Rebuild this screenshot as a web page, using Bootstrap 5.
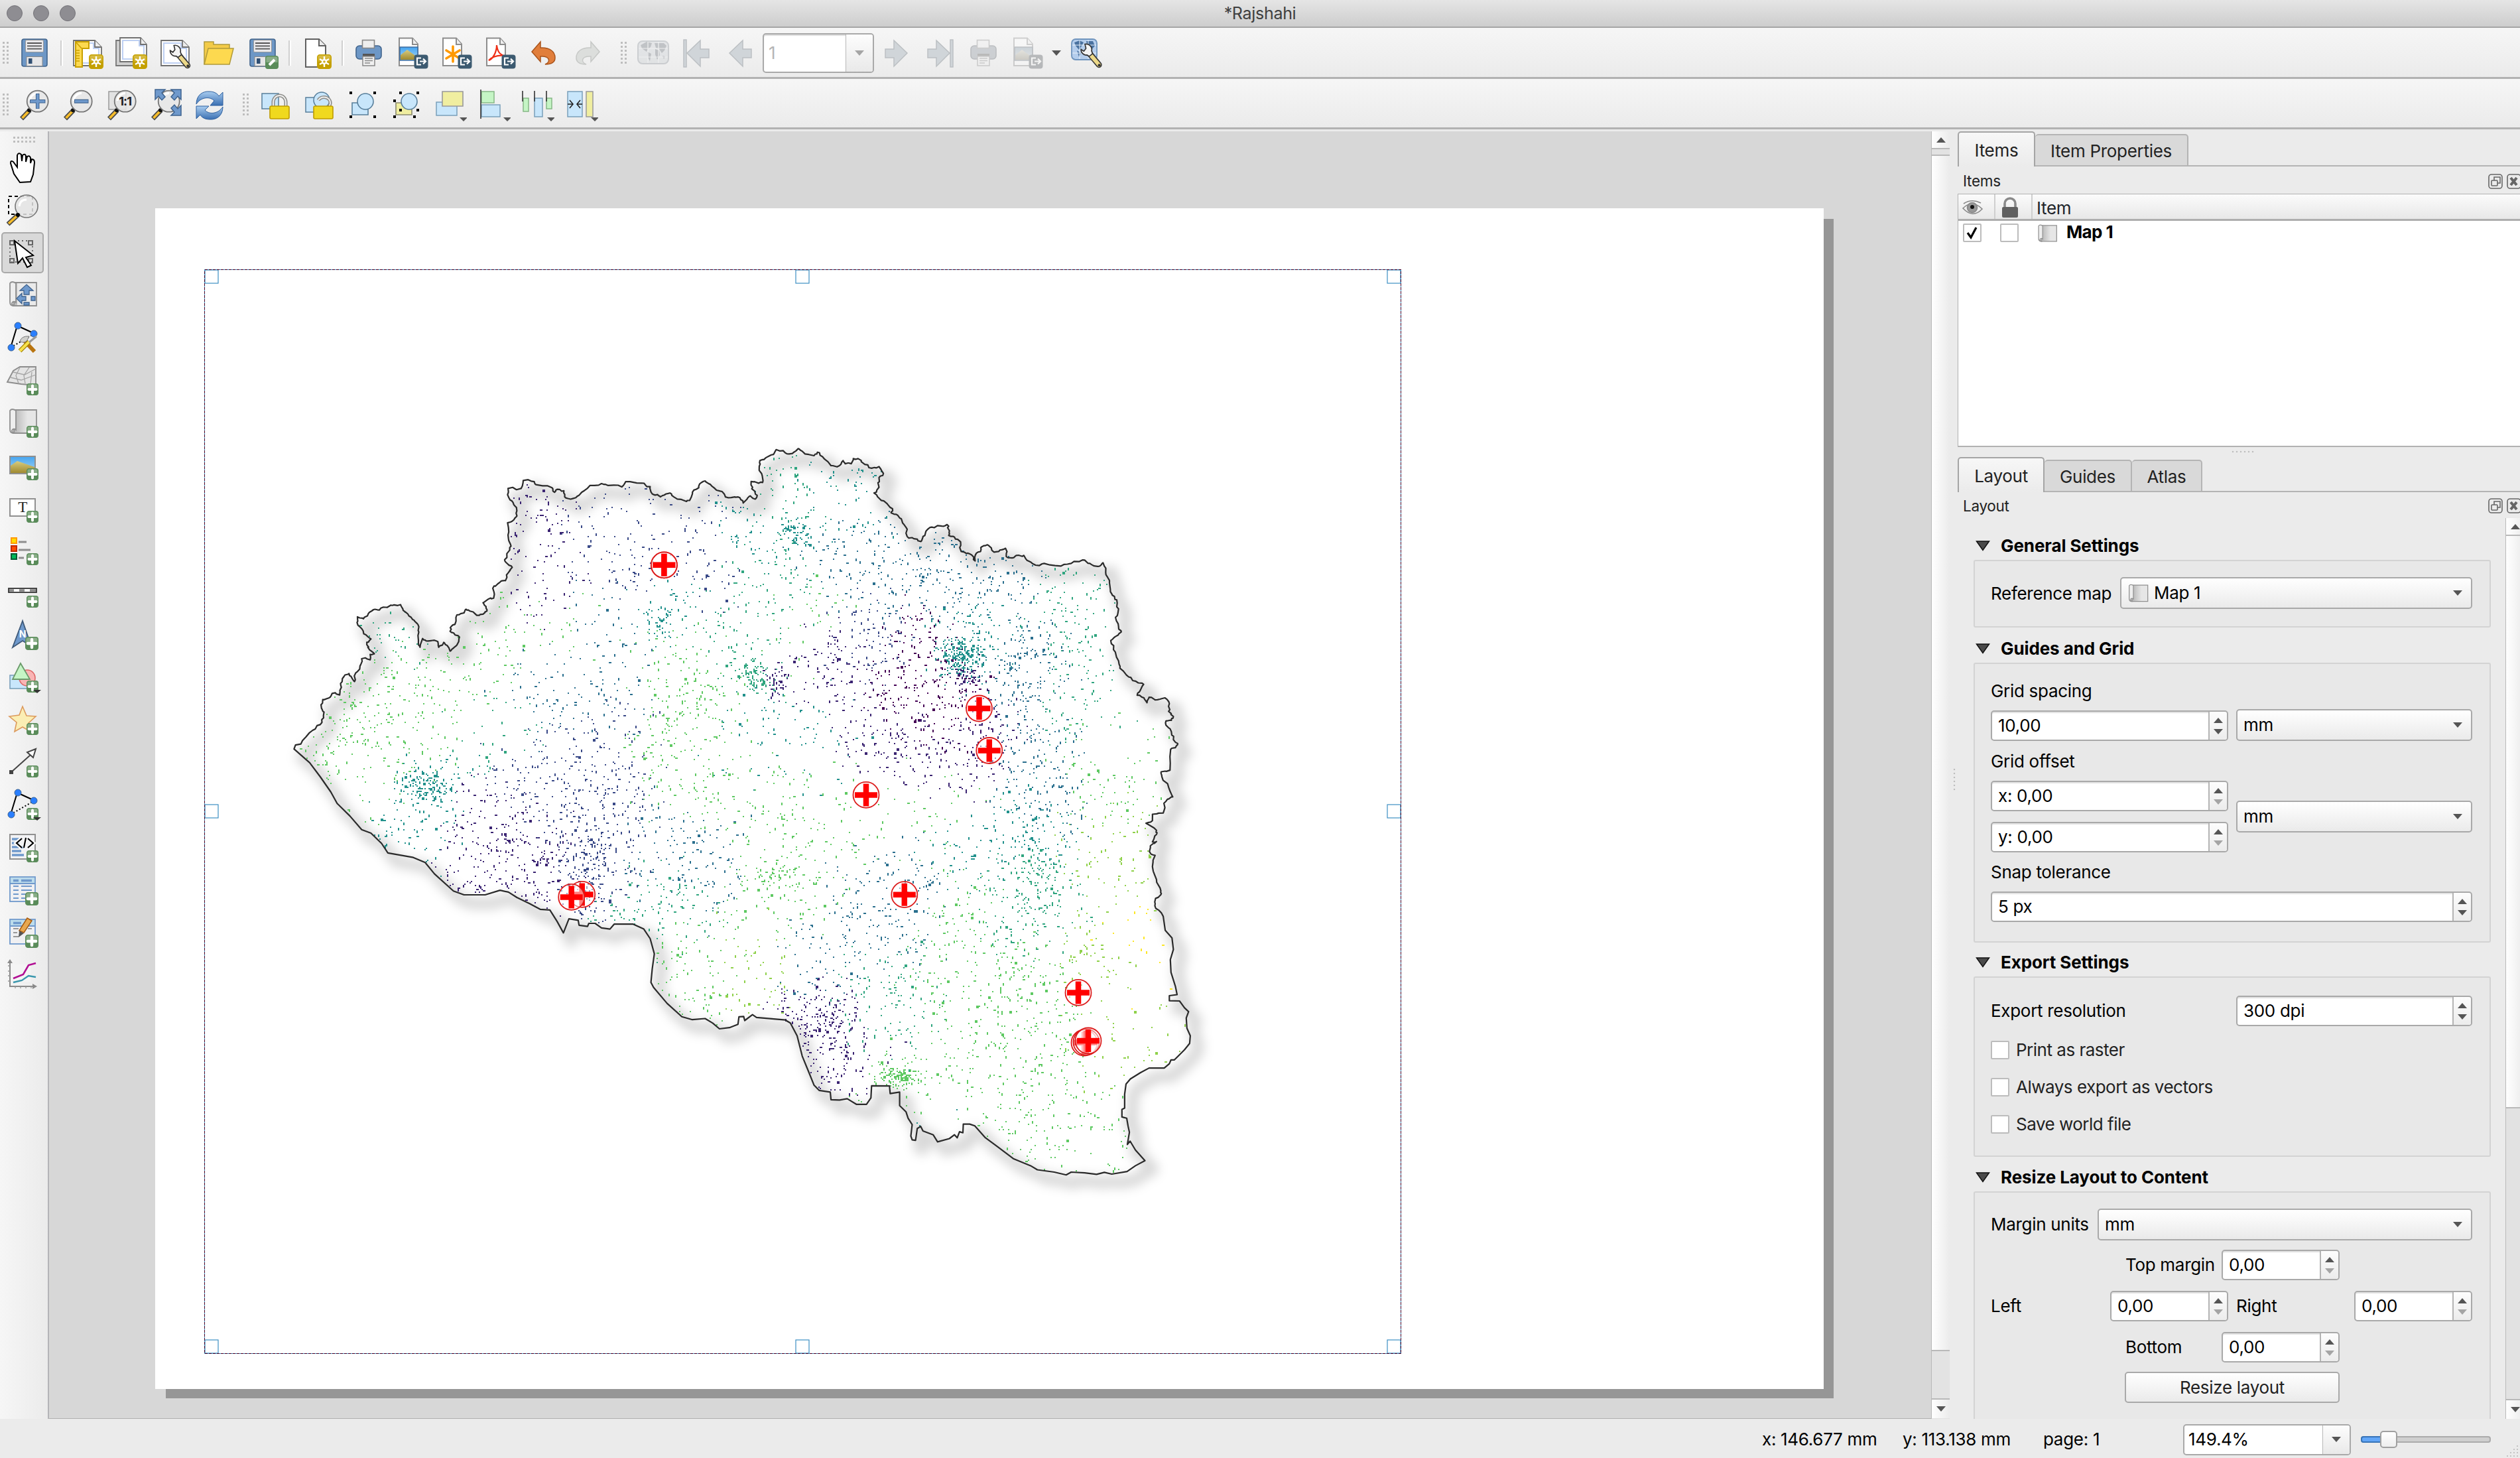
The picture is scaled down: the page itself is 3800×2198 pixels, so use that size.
<!DOCTYPE html>
<html lang="en">
<head>
<meta charset="utf-8">
<title>*Rajshahi</title>
<link href="https://cdn.jsdelivr.net/npm/bootstrap@5.3.0/dist/css/bootstrap.min.css" rel="stylesheet">
<style>
:root{--edge:#a9a9a9;--panel:#ebebeb}
html,body{width:3800px;height:2198px;overflow:hidden}
body{font-family:Inter,"Liberation Sans",sans-serif;font-size:26px;line-height:32px;letter-spacing:-.3px;color:#000;background:var(--panel)}
svg{display:block;flex:none}
.titlebar{height:42px;background:linear-gradient(#e5e5e5,#cdcdcd);border-bottom:2px solid #a5a5a5;color:#404040;flex:none}
.lights{position:absolute;left:10px;top:8px;gap:16px}
.lights i{width:24px;height:24px;border-radius:50%;background:#8e8d92;border:1px solid #737278}
.tools{height:77px;background:linear-gradient(#f6f6f6,#ebebeb);border-bottom:3px solid #b2b2b2;flex:none;padding:2px 0 0 4px}
.tools.second{height:76px;padding-top:5px}
.slot{width:66px;flex:none;display:flex;align-items:center;justify-content:center}
.grip{width:10px;height:34px;margin-right:5px;flex:none;background:radial-gradient(circle at 1.5px 1.5px,#bdbdbd 1.4px,transparent 1.6px) 0 0/6px 6px}
.vsep{width:14px;height:38px;flex:none;background:linear-gradient(90deg,transparent 6px,#d0d0d0 6px,#d0d0d0 8px,#fff 8px,#fff 10px,transparent 10px)}
.ghost{opacity:.35;filter:grayscale(.8)}
.tri{width:0;height:0;border:7px solid transparent;border-bottom-width:0;border-top:8px solid #555;flex:none}
.tri.up{border-bottom:8px solid #555;border-top-width:0}
.tri.off{border-top-color:#a5a5a5}
.boxed{border:2px solid var(--edge);border-radius:5px;background:#fff}
.pagebox{width:168px;height:60px;color:#b5b5b5;box-shadow:inset 0 2px 1px #ddd}
.dropbtn{width:41px;border-left:1px solid #b8b8b8;background:linear-gradient(#fdfdfd,#e9e9e9)}
.sidebar{width:74px;background:linear-gradient(90deg,#f6f6f6,#ebebeb);border-right:2px solid #b4b4b8;padding-top:8px;flex:none}
.sidebar .hgrip{width:34px;height:10px;margin:0 0 5px 20px;background:radial-gradient(circle at 1.5px 1.5px,#bdbdbd 1.4px,transparent 1.6px) 0 0/6px 6px}
.sidebar .tool{height:64px;width:68px;display:flex;align-items:center;justify-content:center}
.sidebar .on{border:2px solid #a9a9a9;border-radius:5px;background:#d9d9d9;width:64px;height:62px;margin:1px 2px}
.stage{background:#d7d7d7;border-bottom:1px solid #b0b0b0;width:2838px;flex:none}
.vbar{width:28px;flex:none;border-left:1px solid #b9b9b9;background:#e2e2e2}
.vbar>div{display:flex;align-items:center;justify-content:center;background:linear-gradient(90deg,#fff,#ebebeb)}
.dock{width:848px;flex:none}
.tabrow{border-bottom:0;position:relative;gap:0;align-items:flex-end;box-shadow:inset 0 -2px #b4b4b4}
.tabrow .nav-link{border:2px solid #b4b4b4;border-bottom:2px solid #b4b4b4;border-left:0;border-radius:5px 5px 0 0;background:#d9d9d9;color:#222;padding:0;text-align:center;margin:0;height:49px;line-height:48px}
.tabrow .nav-link.active{border:2px solid #a5a5a5;border-bottom:0;background:linear-gradient(#f7f7f7,#ebebeb);height:53px;color:#222;line-height:54px}
.docktitle{font-size:22.5px;color:#222;padding:2px 0 0 8px}
.tree{background:#fff;border:1px solid #b2b2b2;border-right:0;border-bottom-width:2px;height:382px;flex:none}
.treehead{height:40px;background:linear-gradient(#fbfbfb,#e8e8e8);border-bottom:3px solid #aeaeae}
.treehead>div{border-right:2px solid #cfcfcf;width:56px;display:flex;align-items:center;justify-content:center;padding:2px 10px 0 0}
.tick{width:28px;height:28px;border:2px solid #bcbcbc;background:#fff;flex:none;border-radius:2px}
.ghead{font-weight:650;letter-spacing:-.1px;height:32px;gap:16px;padding-left:27px}
.gbox{margin-left:24px;width:780px;border:2px solid #d3d3d3;border-radius:3px;background:#e8e8e8;padding:0 26px 0 24px;flex:none}
.combo,.spin{border:2px solid var(--edge);border-radius:5px;display:flex;align-items:center;padding-left:9px;height:46px;flex:none}
.combo{height:48px;background:linear-gradient(#fff,#eaeaea);padding-right:13px}
.combo .tri,.spin .arrows{margin-left:auto}
.spin{background:#fff;box-shadow:inset 0 2px 1px #e2e2e2}
.arrows{width:28px;align-self:stretch;border-left:2px solid #b4b4b4;background:linear-gradient(#fdfdfd,#ececec);display:flex;flex-direction:column;align-items:center;justify-content:center;gap:9px;border-radius:0 4px 4px 0}
.push{background:linear-gradient(#fff,#eaeaea);border:2px solid var(--edge);border-radius:5px;width:324px;height:47px;padding:0;font-size:26px;line-height:43px;color:#222;letter-spacing:-.3px}
.w356{width:356px}.w358{width:358px}.w178{width:178px}
.opt{height:28px;gap:10px;color:#222;letter-spacing:-.5px}
.status{height:58px;flex:none;position:relative}
.track{width:196px;height:10px;border:2px solid #ababab;border-radius:4px;background:#cfcfcf;position:relative}
.track::before{content:"";position:absolute;left:-2px;top:-2px;width:34px;height:10px;background:#62a6f7;border:2px solid #3874b8;border-radius:4px}
.track::after{content:"";position:absolute;left:27px;top:-10px;width:26px;height:26px;border:2px solid #a0a0a0;border-radius:5px;background:linear-gradient(#fff,#eee)}
</style>
<script src="https://cdn.jsdelivr.net/npm/bootstrap@5.3.0/dist/js/bootstrap.bundle.min.js"></script>
</head>
<body class="d-flex flex-column">
<svg width="0" height="0" style="position:absolute">
<defs>
<linearGradient id="gy" x2="0" y2="1"><stop offset="0" stop-color="#d9bf4d"/><stop offset=".5" stop-color="#d0ad20"/><stop offset=".5" stop-color="#c4a000"/></linearGradient>
<linearGradient id="gg" x2="0" y2="1"><stop offset="0" stop-color="#8db08b"/><stop offset=".5" stop-color="#86ab84"/><stop offset=".5" stop-color="#5a8c5a"/></linearGradient>
<linearGradient id="gb" x2="0" y2="1"><stop offset="0" stop-color="#a9cdf0"/><stop offset="1" stop-color="#3a6fb2"/></linearGradient>
<linearGradient id="gsky" x2="0" y2="1"><stop offset="0" stop-color="#45a5f0"/><stop offset="1" stop-color="#a9d6f5"/></linearGradient>
<linearGradient id="gsand" x2="0" y2="1"><stop offset="0" stop-color="#d8cc80"/><stop offset="1" stop-color="#a08a30"/></linearGradient>
<linearGradient id="gmap" x2="1"><stop offset="0" stop-color="#b5b5b5"/><stop offset=".6" stop-color="#e6e6e6"/></linearGradient>
<symbol id="bsun" viewBox="0 0 22 22"><rect x=".8" y=".8" width="20.4" height="20.4" rx="3.5" fill="url(#gy)" stroke="#c4a000" stroke-width="1.5"/><g stroke="#fff" stroke-width="2.4"><path d="M11 3v16M4 7l14 8M4 15l14-8"/></g><circle cx="11" cy="11" r="4" fill="#fff"/><circle cx="11" cy="11" r="1.8" fill="#cfae25"/></symbol>
<symbol id="bplus" viewBox="0 0 18 18"><rect x=".7" y=".7" width="16.6" height="16.6" rx="3" fill="url(#gg)" stroke="#5a8c5a" stroke-width="1.4"/><path d="M9 3.500v11M3.500 9h11" stroke="#fff" stroke-width="4" stroke-linecap="round"/></symbol>
<symbol id="bout" viewBox="0 0 22 22"><rect x=".5" y=".5" width="21" height="21" rx="4" fill="#3c5a70"/><path d="M11 5.500H5v10h6M9 10.500h9M14 6.500l4 4-4 4" fill="none" stroke="#fff" stroke-width="2.200"/></symbol>
<symbol id="lens" viewBox="0 0 48 48"><path d="M4.500 45L17 32" stroke="#4a4a4a" stroke-width="7"/><path d="M5.500 44L15 34" stroke="#f7bd2a" stroke-width="3.600"/><circle cx="16" cy="32.300" r="3" fill="#111"/><circle cx="28.700" cy="18.700" r="16" fill="#e6e6e6" fill-opacity=".85" stroke="#757575" stroke-width="1.800"/><path d="M17 18a12 12 0 0 1 12-11.500" stroke="#fff" stroke-width="3" fill="none"/></symbol>
<symbol id="wrench" viewBox="0 0 32 36"><path d="M13 14L27 31" stroke="#333" stroke-width="8.500" stroke-linecap="round"/><path d="M16 18L27 31" stroke="#ecd888" stroke-width="5.500" stroke-linecap="round"/><path d="M7 1.500l1.500 6-3 4-4-2.500C1 13 5 18 10 17l3 2 5-4-1.500-4C18 6 13 0 7 1.500z" fill="#f4f4f4" stroke="#333" stroke-width="1.600"/><circle cx="27.500" cy="31.500" r="2" fill="#333"/></symbol>
<symbol id="floppy" viewBox="0 0 48 48"><rect x="5" y="3" width="38" height="41" rx="3" fill="#6d97c6" stroke="#41648c" stroke-width="1.600"/><rect x="10.500" y="4.500" width="27" height="18" rx="1.500" fill="#eae9ec" stroke="#999"/><path d="M13 9h22M13 13.300h22M13 17.600h22" stroke="#555" stroke-width="1.800"/><rect x="12" y="29.500" width="24" height="14" fill="#e6e6e8" stroke="#888"/><rect x="15" y="32" width="5.500" height="8" fill="#2f4f73"/></symbol>
<symbol id="printer" viewBox="0 0 48 48"><rect x="5" y="13" width="38" height="20" rx="5" fill="#6d97c6" stroke="#41648c" stroke-width="1.600"/><rect x="14.500" y="4.500" width="18" height="12" fill="#eee" stroke="#888" stroke-width="1.600"/><rect x="15" y="25" width="18" height="6" fill="#555"/><path d="M15 29h18v14H15z" fill="#f0f0f0" stroke="#888" stroke-width="1.500"/><path d="M18 32h12M18 35.500h12M18 39h8" stroke="#888" stroke-width="1.700"/></symbol>
<symbol id="sheet" viewBox="0 0 48 48"><path d="M4 1.500h20l8 9V43H4z" fill="#fff" stroke="#8d8d8d" stroke-width="2"/><path d="M24 1.500V11h8" fill="#eee" stroke="#8d8d8d" stroke-width="2"/></symbol>
<symbol id="globe" viewBox="0 0 48 48"><rect x="1" y="6" width="46" height="34" rx="7" fill="#b9cfe8" stroke="#6f94bd" stroke-width="2"/><path d="M5 12l9-5 8 2-2 6-4 3-2 4-7-5zM15 22l6 3-2 11-3-5zM26 9h14l4 4-3 7-4 4-4-6-5-2zM27 18l6 2 1 7-4 7-3-8zM38 28l4 1-2 4z" fill="#49719f"/><path d="M2 17h44M2 30h44M16 7v32M32 7v32" stroke="#e9f1fa" stroke-width="1.200"/></symbol>
<symbol id="scroll" viewBox="0 0 48 48"><path d="M11 5h34v35H11z" fill="url(#gmap)" stroke="#909090" stroke-width="1.800"/><path d="M5 6q3-4 9 0v29q-4-3-6 1 0 4 5 4h-4q-4-1-4-6z" fill="#eee" stroke="#909090" stroke-width="1.800"/></symbol>
<symbol id="i-plot" viewBox="0 0 48 48"><path d="M7 9h29v26H7z" fill="#f4f4f4"/><path d="M5 43V5M5 42h36" stroke="#8a8a8a" stroke-width="2" fill="none"/><path d="M1 7l4-6 4 6zM39 38l7 4-7 4z" fill="#8a8a8a"/><path d="M2 11h3M2 19h3M2 26h3M2 34h3M13 42v3M21 42v3M29 42v3M37 42v3" stroke="#999" stroke-width="1.300"/><path d="M10 30l15-6 8-14 11-3" stroke="#b10f93" stroke-width="2.600" fill="none"/><path d="M10 36l13-3 10-7 11 2" stroke="#3a97ad" stroke-width="2.400" fill="none"/></symbol>
<symbol id="sync" viewBox="0 0 48 48"><path d="M4 23C4 9 14 3 24 4c7 0 12 3 14 7l6-6v20H25l6-7c-6-7-20-6-27 5z" fill="url(#gb)" stroke="#2d5f9e"/><path d="M44 27c0 14-10 20-20 19-7 0-12-3-14-7l-6 6V26h19l-6 6c6 7 20 6 27-5z" fill="url(#gb)" stroke="#2d5f9e"/></symbol>
<symbol id="padlock" viewBox="0 0 32 42"><rect x="1" y="21" width="29" height="19" rx="2" fill="#f0d91e" stroke="#bf9c00" stroke-width="1.600"/></symbol>
</defs></svg>

<header class="titlebar d-flex align-items-center justify-content-center position-relative"><div class="lights d-flex"><i></i><i></i><i></i></div><span style="font-size:25px">*Rajshahi</span></header>

<nav class="tools d-flex align-items-center">
<div class="grip"></div>
<div class="slot"><svg width="48" height="48"><use href="#floppy"/></svg></div><div class="vsep"></div>
<div class="slot"><svg width="48" height="48" viewBox="0 0 48 48"><path d="M3 5h32l10 10v28H3z" fill="#fff" stroke="#707070" stroke-width="1.800"/><path d="M7 9h26v8h8v22H7z" fill="none" stroke="#bed0f3" stroke-width="2"/><path d="M35 5v10h10" fill="#ececec" stroke="#707070" stroke-width="1.800"/><path d="M6 7h20v10H16v28H6z" fill="#fcd94f" stroke="#c9a000" stroke-width="2"/><path d="M6 7l9 10M7 20h5M7 24h5M7 28h5M7 32h5M7 36h5" stroke="#c9a000" stroke-width="1.500"/><use href="#bsun" x="26" y="26" width="22" height="22"/></svg></div>
<div class="slot"><svg width="48" height="48" viewBox="0 0 48 48"><path d="M1 5h30v38H1z" fill="#cfcfcf" stroke="#777" stroke-width="1.800"/><path d="M7 1h31l9 10v26H7z" fill="#fff" stroke="#707070" stroke-width="1.800"/><path d="M11 5h25v8h7v20H11z" fill="none" stroke="#bed0f3" stroke-width="2"/><path d="M38 1v10h9" fill="#ececec" stroke="#707070" stroke-width="1.800"/><use href="#bsun" x="26" y="26" width="22" height="22"/></svg></div>
<div class="slot"><svg width="48" height="48" viewBox="0 0 48 48"><path d="M3 5h32l10 10v28H3z" fill="#fff" stroke="#707070" stroke-width="1.800"/><path d="M7 9h26v8h8v22H7z" fill="none" stroke="#bed0f3" stroke-width="2"/><path d="M35 5v10h10" fill="#ececec" stroke="#707070" stroke-width="1.800"/><use href="#wrench" x="15" y="11" width="33" height="37"/></svg></div>
<div class="slot"><svg width="48" height="48" viewBox="0 0 48 48"><path d="M2 7h14v4h24v29H2z" fill="#f3cb48" stroke="#b09a3a" stroke-width="1.500"/><path d="M8 17h38l-6 24H2z" fill="#fdd94f" stroke="#b09a3a" stroke-width="1.500"/></svg></div>
<div class="slot"><svg width="48" height="48" viewBox="0 0 48 48"><use href="#floppy"/><rect x="28.700" y="28.700" width="18.600" height="18.600" rx="3" fill="url(#gg)" stroke="#5a8c5a" stroke-width="1.400"/><path d="M34 42l8-8" stroke="#fff" stroke-width="4"/></svg></div><div class="vsep"></div>
<div class="slot"><svg width="48" height="48" viewBox="0 0 48 48"><path d="M9 3h20l10 10v32H9z" fill="#fff" stroke="#606060" stroke-width="2"/><path d="M29 3v10h10" fill="#ececec" stroke="#606060" stroke-width="2"/><use href="#bsun" x="26" y="26" width="22" height="22"/></svg></div><div class="vsep"></div>
<div class="slot"><svg width="48" height="48"><use href="#printer"/></svg></div>
<div class="slot"><svg width="48" height="48" viewBox="0 0 48 48"><use href="#sheet"/><path d="M5 15h27v20H5z" fill="url(#gsky)" stroke="#3f6da0" stroke-width="1.600"/><path d="M6 27l10-8 15 11v4H6z" fill="url(#gsand)"/><use href="#bout" x="26" y="26" width="22" height="22"/></svg></div>
<div class="slot"><svg width="48" height="48" viewBox="0 0 48 48"><use href="#sheet"/><path d="M19 14v23M9 20l20 12M9 32l20-12" stroke="#f90" stroke-width="3.600" stroke-linecap="round"/><use href="#bout" x="26" y="26" width="22" height="22"/></svg></div>
<div class="slot"><svg width="48" height="48" viewBox="0 0 48 48"><use href="#sheet"/><path d="M7 35c6-2 12-12 12-23 1 9 5 15 12 16-9-1-18 1-24 7z" fill="none" stroke="#ee3018" stroke-width="2.200"/><use href="#bout" x="26" y="26" width="22" height="22"/></svg></div>
<div class="slot"><svg width="48" height="48" viewBox="0 0 48 48"><path d="M6 22L19 7v9c14-1 22 6 22 15 0 7-5 10-15 10 9-4 7-13-7-12v8z" fill="#e17e3b" stroke="#a9541c" stroke-width="1.500"/></svg></div>
<div class="slot"><svg width="48" height="48" viewBox="0 0 48 48"><path d="M42 22L29 7v9C15 15 7 22 7 31c0 7 5 10 15 10-9-4-7-13 7-12v8z" fill="#dcdedc" stroke="#c6c8c6" stroke-width="1.500"/></svg></div>
<div class="grip" style="margin:0 6px 0 17px"></div>
<div class="slot ghost"><svg width="48" height="48"><use href="#globe"/></svg></div>
<div class="slot"><svg width="48" height="48" viewBox="0 0 48 48" fill="#d0d5d9" stroke="#bcc0c3" stroke-width="1.500"><path d="M4 4h4v41H4zM9 24L29 5v13h13v13H29v13z"/></svg></div>
<div class="slot"><svg width="48" height="48" viewBox="0 0 48 48" fill="#d0d5d9" stroke="#bcc0c3" stroke-width="1.500"><path d="M7 24L27 5v13h13v13H27v13z"/></svg></div>
<div class="boxed pagebox d-flex align-items-center overflow-hidden" style="padding-left:7px"><span>1</span><div class="dropbtn ms-auto h-100 d-flex align-items-center justify-content-center"><span class="tri off"></span></div></div>
<div class="slot"><svg width="48" height="48" viewBox="0 0 48 48" fill="#d0d5d9" stroke="#bcc0c3" stroke-width="1.500"><path d="M41 24L21 5v13H8v13h13v13z"/></svg></div>
<div class="slot"><svg width="48" height="48" viewBox="0 0 48 48" fill="#d0d5d9" stroke="#bcc0c3" stroke-width="1.500"><path d="M40 4h4v41h-4zM39 24L19 5v13H6v13h13v13z"/></svg></div>
<div class="slot ghost"><svg width="48" height="48"><use href="#printer"/></svg></div>
<div class="slot ghost"><svg width="48" height="48" viewBox="0 0 48 48"><use href="#sheet"/><path d="M5 15h27v20H5z" fill="url(#gsky)" stroke="#3f6da0" stroke-width="1.600"/><path d="M6 27l10-8 15 11v4H6z" fill="url(#gsand)"/><use href="#bout" x="26" y="26" width="22" height="22"/></svg></div>
<span class="tri" style="margin:0 6px 0 4px"></span>
<div class="slot"><svg width="50" height="48" viewBox="0 0 50 48"><rect x="2" y="3" width="38" height="31" rx="6" fill="#b4cdec" stroke="#6f94bd" stroke-width="1.800"/><path d="M6 8l8-3 6 3-4 7-3 4-5-6zM24 6h10l3 7-5 6-6-4zM10 20l6 4-3 6z" fill="#49719f"/><path d="M3 12h36M3 24h36M14 4v29M27 4v29" stroke="#e9f1fa"/><use href="#wrench" x="14" y="9" width="35" height="38"/></svg></div>
</nav>

<nav class="tools second d-flex align-items-center">
<div class="grip"></div>
<div class="slot"><svg width="48" height="48" viewBox="0 0 48 48"><use href="#lens"/><path d="M28.700 7v23M17 18.700h23.400" stroke="#3f638e" stroke-width="5.500"/><path d="M28.700 8v21.500M18 18.700h21.400" stroke="#6f99cc" stroke-width="3.400"/></svg></div>
<div class="slot"><svg width="48" height="48" viewBox="0 0 48 48"><use href="#lens"/><path d="M18 18.700h21.500" stroke="#3f638e" stroke-width="6"/><path d="M19 18.700h19.500" stroke="#6f99cc" stroke-width="3.600"/></svg></div>
<div class="slot"><svg width="48" height="48" viewBox="0 0 48 48"><path d="M4 4h26v27H4z" fill="#e2e2e2" stroke="#999" stroke-width="1.500"/><use href="#lens"/><text x="28.700" y="25" font-size="18" font-weight="700" font-family="Inter" text-anchor="middle" fill="#222" letter-spacing="-.8">1:1</text></svg></div>
<div class="slot"><svg width="48" height="48" viewBox="0 0 48 48"><use href="#lens"/><g fill="#6f99cc" stroke="#3f638e" stroke-width="1.500"><path d="M8 1h15l-5 5 5 6-5 5-5-6-5 5z"/><path d="M47 1H32l5 5-5 6 5 5 5-6 5 5zM47 40H32l5-5-5-6 5-5 5 6 5-5z"/></g></svg></div>
<div class="slot"><svg width="48" height="48"><use href="#sync"/></svg></div>
<div class="grip" style="margin:0 6px 0 17px"></div>
<div class="slot"><svg width="48" height="48" viewBox="0 0 48 48"><path d="M4 7h25v23H4z" fill="#c8e6fb" stroke="#587f9b" stroke-width="1.500"/><path d="M21 28V20a9.500 10 0 0 1 19 0v8" fill="none" stroke="#8c8c88" stroke-width="5"/><path d="M21 28V20a9.500 10 0 0 1 19 0v8" fill="none" stroke="#eee" stroke-width="2"/><use href="#padlock" x="15" y="5" width="32" height="42"/></svg></div>
<div class="slot"><svg width="48" height="48" viewBox="0 0 48 48"><path d="M4 13h22v22H4z" fill="#c8e6fb" stroke="#587f9b" stroke-width="1.500"/><circle cx="28" cy="17" r="12" fill="#c8e6fb" stroke="#587f9b" stroke-width="1.500"/><path d="M23 17a9 8 0 1 1 17 8v3" fill="none" stroke="#8c8c88" stroke-width="5"/><path d="M23 17a9 8 0 1 1 17 8v3" fill="none" stroke="#eee" stroke-width="2"/><use href="#padlock" x="15" y="5" width="32" height="42"/></svg></div>
<div class="slot"><svg width="48" height="48" viewBox="0 0 48 48"><path d="M8 21h24v18H8z" fill="#c8e6fb" stroke="#587f9b" stroke-width="1.600"/><circle cx="28" cy="19" r="12" fill="#c8e6fb" stroke="#587f9b" stroke-width="1.600"/><path d="M4 4h4v4H4zM40 4h4v4h-4zM4 40h4v4H4zM40 40h4v4h-4z"/></svg></div>
<div class="slot"><svg width="48" height="48" viewBox="0 0 48 48"><path d="M8 21h24v18H8z" fill="#f0eea0" stroke="#8a8a70" stroke-width="1.600"/><circle cx="28" cy="19" r="12" fill="#c8e6fb" stroke="#587f9b" stroke-width="1.600"/><path d="M13 4h4v4h-4zM39 4h4v4h-4zM4 16h4v4H4zM13 30h4v4h-4zM39 30h4v4h-4zM4 40h4v4H4zM34 40h4v4h-4z"/></svg></div>
<div class="slot"><svg width="50" height="52" viewBox="0 0 50 52"><path d="M4 22h31v20H4z" fill="#c8e6fb" stroke="#7aa0bb" stroke-width="1.500"/><path d="M13 6h31v22H13z" fill="#f0eea0" stroke="#999" stroke-width="1.600"/><path d="M39 45h12l-6 6z" fill="#555"/></svg></div>
<div class="slot"><svg width="50" height="52" viewBox="0 0 50 52"><path d="M6 6h19v17H6z" fill="#c5f5c5" stroke="#86b886" stroke-width="1.500"/><path d="M6 26h28v18H6z" fill="#c8e6fb" stroke="#7aa0bb" stroke-width="1.500"/><path d="M5 3v44" stroke="#333" stroke-width="1.600"/><path d="M39 45h12l-6 6z" fill="#555"/></svg></div>
<div class="slot"><svg width="50" height="52" viewBox="0 0 50 52"><path d="M3 16h8v20H3zM38 16h8v16h-8z" fill="#c5f5c5" stroke="#86b886" stroke-width="1.500"/><path d="M20 16h12v28H20z" fill="#c8e6fb" stroke="#7aa0bb" stroke-width="1.500"/><path d="M2 5v16M20 5v16M38 5v16" stroke="#333" stroke-width="1.600"/><path d="M39 45h12l-6 6z" fill="#555"/></svg></div>
<div class="slot"><svg width="50" height="52" viewBox="0 0 50 52"><path d="M4 6h22v38H4z" fill="#c8e6fb" stroke="#7aa0bb" stroke-width="1.500"/><path d="M32 6h10v38H32z" fill="#f0eea0" stroke="#999" stroke-width="1.500"/><path d="M4 25h8M7 19l5 6-5 6M26 25h-8M23 19l-5 6 5 6" fill="none" stroke="#222" stroke-width="1.600"/><path d="M39 45h12l-6 6z" fill="#555"/></svg></div>
</nav>

<main class="d-flex" style="height:1941px;margin-top:3px">
<aside class="sidebar" id="side"><div class="hgrip"></div></aside>

<section class="stage">
<svg id="paper" width="2838" height="1940" viewBox="74 198 2838 1940">
<defs><filter id="soft" x="-10%" y="-10%" width="120%" height="120%"><feGaussianBlur stdDeviation="8"/></filter></defs>
<rect x="250" y="330" width="2515" height="1778" fill="#969696"/>
<rect x="234" y="314" width="2516" height="1780" fill="#fff"/>
<g id="district"></g>
<g id="clinics"></g>
<g fill="#fff" stroke="#3d8fc4" stroke-width="1.200" id="handles"></g>
<rect x="308.500" y="406.500" width="1804" height="1634" fill="none" stroke="#3d9ac4" stroke-width="1" shape-rendering="crispEdges"/>
<rect x="308.500" y="406.500" width="1804" height="1634" fill="none" stroke="#4a0028" stroke-width="1" stroke-dasharray="4 2" shape-rendering="crispEdges"/>
</svg>
</section>

<div class="vbar d-flex flex-column">
<div style="height:25px"><span class="tri up"></span></div>
<div style="height:12px;background:#e2e2e2;border:2px solid #b9b9b9;border-width:2px 0"></div>
<div style="height:1800px"></div>
<div style="height:75px;background:#e3e3e3;border:2px solid #b9b9b9;border-width:2px 0"></div>
<div style="height:28px"><span class="tri"></span></div>
</div>
<div style="width:12px;background:radial-gradient(circle at 7px 2px,#bdbdbd 1.400px,transparent 1.600px) 0 0/12px 6px;background-clip:content-box;padding:958px 0 947px" class="flex-shrink-0"></div>

<section class="dock d-flex flex-column">
<div class="nav nav-tabs tabrow" style="height:53px"><a class="nav-link active" style="width:117px">Items</a><a class="nav-link" style="width:231px">Item Properties</a></div>
<div class="docktitle d-flex align-items-center" style="height:41px"><span>Items</span>
<svg class="ms-auto" style="margin-top:2px" width="48" height="24" viewBox="0 0 48 24" fill="none" stroke="#666" stroke-width="1.600"><rect x="1" y="1" width="20" height="21" rx="4"/><rect x="5" y="10" width="9" height="8" rx="1"/><path d="M9 10V5h9v9h-4"/><rect x="29" y="1" width="20" height="21" rx="4"/><path d="M34 6l9 11M43 6l-9 11" stroke-width="4"/></svg></div>
<div class="tree">
<div class="treehead d-flex"><div><svg width="32" height="26" viewBox="0 0 32 26" fill="none" stroke="#888" stroke-width="1.600"><path d="M1 14Q15 0 30 15Q16 30 1 14zM2 7Q14-1 28 6"/><circle cx="15" cy="13" r="7.500" fill="#999"/><circle cx="15" cy="12" r="3" fill="#111" stroke="none"/></svg></div><div><svg width="26" height="32" viewBox="0 0 26 32"><path d="M5 16V10a8 8 0 0 1 16 0v6" fill="none" stroke="#8a8a8a" stroke-width="3.600"/><rect x="1" y="15" width="24" height="16" rx="2" fill="#606060"/></svg></div><span class="text-dark" style="padding:5px 0 0 6px">Item</span></div>
<div class="d-flex align-items-center" style="height:36px;padding-left:7px"><span class="tick"><svg width="24" height="24" viewBox="0 0 24 24"><path d="M5 12l5 7 8-15" fill="none" stroke="#000" stroke-width="3.200"/></svg></span><span class="tick" style="margin-left:28px"></span><svg style="margin:0 14px 0 28px" width="30" height="29" viewBox="2 2 44 40"><use href="#scroll" width="48" height="48"/></svg><span style="font-weight:700;letter-spacing:-.6px;margin-top:-3px">Map 1</span></div>
</div>
<div style="height:15px;background:radial-gradient(circle at 2px 7px,#bdbdbd 1.400px,transparent 1.600px) 413px 0/6px 14px;width:448px;background-clip:content-box;padding-left:413px"></div>
<div class="nav nav-tabs tabrow" style="height:53px"><a class="nav-link active" style="width:131px">Layout</a><a class="nav-link" style="width:132px">Guides</a><a class="nav-link" style="width:106px">Atlas</a></div>
<div class="docktitle d-flex align-items-center" style="height:39px"><span>Layout</span>
<svg class="ms-auto" width="48" height="24" viewBox="0 0 48 24" fill="none" stroke="#666" stroke-width="1.600"><rect x="1" y="1" width="20" height="21" rx="4"/><rect x="5" y="10" width="9" height="8" rx="1"/><path d="M9 10V5h9v9h-4"/><rect x="29" y="1" width="20" height="21" rx="4"/><path d="M34 6l9 11M43 6l-9 11" stroke-width="4"/></svg></div>
<div class="d-flex overflow-hidden" style="height:1358px">
<div class="d-flex flex-column flex-shrink-0" style="width:826px;padding-top:26px">
 <div class="ghead d-flex align-items-center"><svg width="22" height="16"><path d="M1.500 1h19L11 14.500z" fill="#4a4a4a" stroke="#111" stroke-width="1.500"/></svg>General Settings</div>
 <div class="gbox d-flex" style="height:102px;margin-top:5px;padding-top:24px"><span style="width:195px;line-height:50px">Reference map</span><div class="combo flex-grow-1"><svg style="margin-right:8px" width="32" height="28" viewBox="2 2 44 40"><use href="#scroll" width="48" height="48"/></svg>Map 1<span class="tri"></span></div></div>
 <div class="ghead d-flex align-items-center" style="margin-top:16px"><svg width="22" height="16"><path d="M1.500 1h19L11 14.500z" fill="#4a4a4a" stroke="#111" stroke-width="1.500"/></svg>Guides and Grid</div>
 <div class="gbox" style="height:422px;margin-top:5px;padding-top:25px">
  <div>Grid spacing</div>
  <div class="d-flex justify-content-between align-items-end" style="margin-top:11px"><div class="spin w358">10,00<div class="arrows"><span class="tri up"></span><span class="tri"></span></div></div><div class="combo w356">mm<span class="tri"></span></div></div>
  <div style="margin-top:15px">Grid offset</div>
  <div class="d-flex justify-content-between align-items-center" style="margin-top:13px"><div class="d-flex flex-column" style="gap:16px"><div class="spin w358">x: 0,00<div class="arrows"><span class="tri up"></span><span class="tri off"></span></div></div><div class="spin w358">y: 0,00<div class="arrows"><span class="tri up"></span><span class="tri off"></span></div></div></div><div class="combo w356">mm<span class="tri"></span></div></div>
  <div style="margin-top:14px">Snap tolerance</div>
  <div class="spin" style="margin-top:13px">5 px<div class="arrows"><span class="tri up"></span><span class="tri"></span></div></div>
 </div>
 <div class="ghead d-flex align-items-center" style="margin-top:14px"><svg width="22" height="16"><path d="M1.500 1h19L11 14.500z" fill="#4a4a4a" stroke="#111" stroke-width="1.500"/></svg>Export Settings</div>
 <div class="gbox" style="height:272px;margin-top:5px;padding-top:27px">
  <div class="d-flex justify-content-between align-items-center">Export resolution<div class="spin w356">300 dpi<div class="arrows"><span class="tri up"></span><span class="tri"></span></div></div></div>
  <div class="opt d-flex align-items-center" style="margin-top:22px"><span class="tick"></span>Print as raster</div>
  <div class="opt d-flex align-items-center" style="margin-top:28px"><span class="tick"></span>Always export as vectors</div>
  <div class="opt d-flex align-items-center" style="margin-top:28px"><span class="tick"></span>Save world file</div>
 </div>
 <div class="ghead d-flex align-items-center" style="margin-top:15px"><svg width="22" height="16"><path d="M1.500 1h19L11 14.500z" fill="#4a4a4a" stroke="#111" stroke-width="1.500"/></svg>Resize Layout to Content</div>
 <div class="gbox" style="height:380px;margin-top:5px;padding-top:24px">
  <div class="d-flex align-items-center"><span style="width:161px">Margin units</span><div class="combo flex-grow-1">mm<span class="tri"></span></div></div>
  <div class="d-flex align-items-center" style="margin-top:14px;padding-left:203px"><span style="width:145px">Top margin</span><div class="spin w178">0,00<div class="arrows"><span class="tri up"></span><span class="tri off"></span></div></div></div>
  <div class="d-flex align-items-center" style="margin-top:16px"><span style="width:180px">Left</span><div class="spin w178">0,00<div class="arrows"><span class="tri up"></span><span class="tri off"></span></div></div><span style="width:178px;padding-left:12px">Right</span><div class="spin w178 ms-auto">0,00<div class="arrows"><span class="tri up"></span><span class="tri off"></span></div></div></div>
  <div class="d-flex align-items-center" style="margin-top:16px;padding-left:203px"><span style="width:145px">Bottom</span><div class="spin w178">0,00<div class="arrows"><span class="tri up"></span><span class="tri off"></span></div></div></div>
  <button class="push d-block" style="margin:14px 0 0 202px">Resize layout</button>
 </div>
</div>
<div class="vbar d-flex flex-column"><div style="height:27px;border-bottom:2px solid #b9b9b9"><span class="tri up"></span></div><div style="height:863px;border-bottom:2px solid #b9b9b9"></div><div style="height:440px;background:#e2e2e2;border-bottom:2px solid #b9b9b9"></div><div style="height:28px"><span class="tri"></span></div></div>
</div>
</section>
</main>

<footer class="status d-flex align-items-center" style="padding:4px 44px 0 2657px"><span style="width:212px">x: 146.677 mm</span><span style="width:212px">y: 113.138 mm</span><span>page: 1</span>
<div class="boxed d-flex align-items-center overflow-hidden ms-auto" style="width:253px;height:47px;padding-left:6px">149.4%<div class="dropbtn ms-auto h-100 d-flex align-items-center justify-content-center"><span class="tri"></span></div></div>
<div class="track" style="margin-left:15px"></div>
<svg style="position:absolute;right:0;bottom:0" width="20" height="20" fill="#c4c4c4"><path d="M15 2h2v2h-2zM10 7h2v2h-2zM15 7h2v2h-2zM5 12h2v2H5zM10 12h2v2h-2zM15 12h2v2h-2zM0 17h2v2H0zM5 17h2v2H5zM10 17h2v2h-2zM15 17h2v2h-2z"/></svg>
</footer>

<script>
const plus='<use href="#bplus" x="30" y="29" width="18" height="18"/>';
const drop='<path d="M40 43h12l-6 5z" fill="#333"/>';
const nodes='<path d="M6 39L16 6l24 11" fill="none" stroke="#000" stroke-width="2"/><path d="M6 39l34-20" stroke="#000" stroke-width="2" stroke-dasharray="2 3"/><g fill="#2a7fff" stroke="#3f638e"><circle cx="17" cy="6" r="5"/><circle cx="41" cy="18" r="5"/><circle cx="7" cy="39" r="5"/></g>';
const tools=[
'<path d="M20 46L11 33 6 17q0-5 4-2l6 8V5q2-5 6-1l1 10 1-9q4-3 5 1v9l2-8q4-2 5 2v8l2-6q4 0 4 5l-2 18-4 11z" fill="#fff" stroke="#000" stroke-width="2"/>',
'<path d="M3 3h36v27H3z" fill="none" stroke="#000" stroke-width="2" stroke-dasharray="5 4"/><path d="M2 45l15-14" stroke="#4a4a4a" stroke-width="7"/><path d="M3 44l12-11" stroke="#f7bd2a" stroke-width="3.5"/><circle cx="30" cy="18" r="17" fill="#e4e4e4" fill-opacity=".85" stroke="#777" stroke-width="1.600"/><path d="M19 18q1-10 11-10" stroke="#fff" stroke-width="3" fill="none"/><circle cx="17" cy="31" r="3"/>',
'<path d="M5 6h34v32H5z" fill="none" stroke="#666" stroke-width="1.800" stroke-dasharray="2 4"/><path d="M5 6h6v6H5zM33 6h6v6h-6zM5 33h6v6H5zM33 33h6v6h-6z" fill="none" stroke="#666" stroke-width="2"/><path d="M12 6l5 34 7-8 7 14 6-3-8-12 11-3z" fill="#fff" stroke="#000" stroke-width="2"/>',
'<use href="#scroll"/><path d="M16 6h28v33H16z" fill="#eaeaea"/><g fill="#6f99cc" stroke="#3f638e" stroke-width="1.300"><path d="M30 8l10 9h-6v6h-8v-6h-6zM15 29l8-8v5h6v6h-6v5zM37 26h6v6h-6zM26 35h8v4h-8z"/></g>',
nodes+'<path d="M42 45L27 29" stroke="#b87410" stroke-width="6"/><path d="M20 44l14-14" stroke="#a08000" stroke-width="6.500"/><path d="M20 44l14-14" stroke="#f7e04a" stroke-width="4"/><path d="M20 30q2-9 14-8l-3 6q-4 5-11 2z" fill="#d0d0cc" stroke="#777"/><path d="M34 31l11-9" stroke="#999" stroke-width="3"/>',
'<path d="M1 27L10 10 20 4h24v28l-22-2z" fill="#e4e4e4" stroke="#8c8c8c" stroke-width="1.800"/><path d="M10 12l17 4 17-9M6 20l16 4 22-8M20 5l-6 12 4 12M34 5l-8 12 2 12M38 12l-2 18" fill="none" stroke="#a5a5a5" stroke-width="1.300"/>'+plus,
'<use href="#scroll"/>'+plus,
'<rect x="5" y="11" width="38" height="26" fill="url(#gsky)" stroke="#909090" stroke-width="2"/><path d="M6 25l10-7 26 9v9H6z" fill="url(#gsand)"/>'+plus,
'<rect x="5" y="11" width="38" height="26" fill="#fff" stroke="#909090" stroke-width="2"/><text x="24" y="31" text-anchor="middle" font-family="Liberation Serif" font-size="23" fill="#222">T</text>'+plus,
'<g stroke-width="2"><rect x="7" y="6" width="8" height="8" fill="#ffdd00" stroke="#f90"/><rect x="7" y="18" width="8" height="8" fill="#ff4a00" stroke="#c02800"/><rect x="7" y="30" width="8" height="8" fill="#00b858" stroke="#005a35"/></g><path d="M18 12h12M18 24h18M18 36h8" stroke="#8e8e8e" stroke-width="3"/>'+plus,
'<rect x="3" y="18" width="42" height="6" fill="#fff" stroke="#333" stroke-width="1.800"/><path d="M4 21h7M19 21h8M35 21h9" stroke="#888" stroke-width="3.500"/>'+plus,
'<path d="M24 3L9 43l15-10 13 8z" fill="#6f99cc" stroke="#3f5a7a" stroke-width="1.800"/><text x="24" y="28" font-size="14" font-weight="700" text-anchor="middle" fill="#fff">N</text><use href="#bplus" x="28" y="27" width="20" height="20"/>',
'<rect x="5" y="21" width="30" height="20" fill="#c8e6fb" stroke="#7aa0bb" stroke-width="1.600"/><circle cx="31" cy="25" r="12" fill="#f9b4b4" stroke="#d66" stroke-width="1.600"/><path d="M21 3L9 27h26z" fill="#c5f5c5" stroke="#6a9a6a" stroke-width="1.800"/>'+plus+drop,
'<path d="M24 4l6 14 14 1-11 10 3 13-12-7-12 7 3-14L4 19l15-2z" fill="#fbeeb4" stroke="#dc9a5c" stroke-width="1.600"/>'+plus,
'<path d="M7 39L36 13" stroke="#444" stroke-width="2"/><path d="M44 4L31 9l9 8z" fill="#fff" stroke="#444" stroke-width="2"/><rect x="4" y="36" width="6" height="6" fill="#444"/>'+plus,
nodes+plus+drop,
'<rect x="5" y="5" width="38" height="37" fill="#f2f2f4" stroke="#909090" stroke-width="2"/><path d="M8 12h14M8 18h11M8 24h18M8 30h14M8 36h18" stroke="#6f99cc" stroke-width="3.500"/><path d="M22 11l-8 7 8 7M33 11l8 7-8 7M29 10l-3 15" fill="none" stroke="#fff" stroke-width="5"/><path d="M23 11l-8 7 8 7M32 11l8 7-8 7M29 10l-3 15" fill="none" stroke="#000" stroke-width="2.200"/>'+plus,
'<rect x="5" y="5" width="38" height="37" fill="#f0f0f2" stroke="#6f99cc" stroke-width="1.800"/><path d="M6 6h36v9H6z" fill="#bcdcec"/><path d="M5 15h38" stroke="#6f99cc" stroke-width="2"/><path d="M10 10.500h8M22 10.500h16" stroke="#6f99cc" stroke-width="3.500"/><path d="M10 19h8M10 25h8M10 31h8M10 37h8M22 19h16M22 25h16M22 31h16M22 37h8" stroke="#6f99cc" stroke-width="2"/><use href="#bplus" x="28" y="28" width="20" height="20"/>',
'<rect x="5" y="5" width="38" height="37" fill="#f0f0f2" stroke="#6f99cc" stroke-width="1.800"/><path d="M6 6h36v9H6z" fill="#bcdcec"/><path d="M5 15h38" stroke="#6f99cc" stroke-width="2"/><path d="M10 10.500h12" stroke="#6f99cc" stroke-width="3.500"/><path d="M10 19h8M10 25h6M10 31h8M32 19h6" stroke="#999" stroke-width="2"/><path d="M31 3l7 4-12 18-7-3z" fill="#e8a850" stroke="#a85c10" stroke-width="1.500"/><path d="M19 22l7 4-8 6z" fill="#555"/><use href="#bplus" x="28" y="28" width="20" height="20"/>',
'<use href="#i-plot"/>'];
document.getElementById('side').insertAdjacentHTML('beforeend',tools.map((t,i)=>`<div class="tool${i==2?' on':''}"><svg width="48" height="48" viewBox="0 0 48 48" overflow="visible">${t}</svg></div>`).join(''));

// Boundary digitised on overlapping sheets: origin x, y, units per pixel in x and y, vertices
const sheets=[
[400,640,1.568,1.742,"68,852 88,830 112,803 130,788 138,770 139,755 133,745 136,722 150,718 158,706 176,710 180,690 178,680 186,662 198,654 206,668 211,675 214,652 224,634 228,615 248,618 248,604 258,602 247,592 240,578 240,572 250,563 238,552 228,536 217,520 218,505 232,510 244,496 256,486 270,487 285,480 300,475 320,473 326,488 340,503 352,514 361,525 363,545 362,575 366,585 372,562 380,568 395,567 408,570 410,585 422,572 430,580 437,595 445,587 455,575 459,558 446,548 437,543 440,530 450,520 453,500 465,496 475,485 484,490 500,501 515,498 524,490 522,478 515,468 528,458 540,456 538,430 550,418 562,410 568,410 574,390 584,375 572,365 566,355 578,330 580,315 574,290 573,258 588,250 595,240 594,218 586,205 576,192 574,168 605,168 610,147 636,150 640,158 678,166 684,178 690,170 706,174 708,190 722,196 738,188 748,178 768,160 795,155 810,160 843,164 852,150 890,154 910,163 915,182 928,184 934,190 948,182 957,180 966,190 996,202 1005,196 1010,178 1025,166 1028,155 1040,148 1052,157 1062,167 1080,176 1088,190 1110,190 1122,192 1130,206"],
[1100,640,1.96,2.063,"52,232 62,222 76,232 82,220 66,200 64,177 80,180 98,180 97,160 88,130 90,112 108,103 130,93 138,78 165,88 186,90 203,75 215,83 250,97 260,86 275,100 300,128 325,128 336,112 342,122 360,122 366,106 380,106 400,124 420,136 442,131 455,152 442,165 442,195 427,213 445,232 465,245 482,262 478,275 497,282 510,300 522,320 525,348 545,355 566,364 572,348 582,330 598,319 628,316 643,311 650,330 648,345 665,350 683,365 685,395 705,400 718,408 726,424 730,400 742,395 746,380 762,374 774,384 782,397 800,390 816,385 818,410 840,414 848,407 870,407 880,423 895,432 912,438 930,432 980,440 1010,432 1044,421 1065,432 1088,441 1097,438 1104,430 1112,460 1123,485 1126,520 1138,535 1146,555 1149,580 1141,600 1150,628 1158,645 1140,660 1127,672 1135,700 1150,735 1154,758 1180,785 1200,798 1224,808 1215,825 1205,842 1225,850 1234,865 1240,848 1265,856 1287,850 1300,868 1298,892 1312,908 1306,920 1290,922 1290,935 1306,955 1312,980 1325,992 1318,1005 1304,1010 1302,1075 1276,1080 1278,1095 1298,1128 1310,1158 1295,1165 1284,1178 1282,1208 1250,1212 1250,1232 1231,1240 1262,1262 1262,1275 1250,1298 1262,1297 1244,1310 1244,1333 1258,1340 1250,1375 1262,1415 1275,1450 1275,1462 1257,1485 1260,1505 1282,1530"],
[1100,1240,1.96,2.613,"1288,425 1308,455 1312,500 1303,540 1305,590 1318,645 1323,678 1300,682 1300,702 1330,703 1345,730 1357,745 1350,770 1352,810 1362,840 1360,870 1345,895 1315,935 1305,935 1300,950 1285,967 1240,967 1215,985 1185,1010 1172,1030 1168,1070 1168,1125 1160,1130 1160,1160 1174,1165 1178,1195 1182,1220 1176,1268 1184,1255 1200,1290 1228,1332 1200,1352 1175,1375 1130,1385 1108,1378 1085,1386 1050,1380 1010,1377 995,1388 960,1377 910,1368 890,1352 840,1325 790,1275 755,1240 725,1195 710,1188 691,1188 690,1222 680,1218 673,1242 665,1230 650,1245 615,1258 602,1230 572,1215 565,1197 555,1205 550,1252 540,1250 536,1235 540,1190 528,1165 522,1140 503,1115 503,1062 475,1068 473,1038 420,1037 418,1085 405,1110 375,1110 348,1088 325,1093 300,1092 298,1062 265,1055 250,1035 235,985 215,920 200,840 180,790 165,778 80,768 68,757 45,780 42,764 28,765 25,795 0,808"],
[400,640,1.568,1.742,"1074,1587 1058,1572 1040,1560 1010,1563 985,1555 950,1520 918,1478 912,1465 915,1430 920,1390 910,1350 895,1325 870,1312 825,1312 815,1325 795,1322 780,1310 765,1310 762,1318 742,1315 740,1302 718,1298 705,1335 690,1305 673,1275 650,1273 625,1258 595,1242 575,1228 555,1223 520,1235 470,1235 445,1225 400,1180 378,1150 350,1137 290,1125 275,1100 250,1073 228,1064 200,1028 170,995 155,965 130,925 105,888"]];
let seed=7;const rnd=()=>{seed=seed+0x6D2B79F5|0;let t=Math.imul(seed^seed>>>15,1|seed);t=t+Math.imul(t^t>>>7,61|t)^t;return((t^t>>>14)>>>0)/4294967296};
const gauss=()=>(rnd()+rnd()+rnd()+rnd()-2)*1.7;
const poly=[];sheets.forEach(([ox,oy,sx,sy,s],k)=>{let prev;s.split(' ').forEach(p=>{const[a,b]=p.split(',').map(Number),q=[ox+a/sx,oy+b/sy];
 if(prev&&k<2){const L=Math.hypot(q[0]-prev[0],q[1]-prev[1]);for(const f of[.33,.66])poly.push([prev[0]+(q[0]-prev[0])*f+(rnd()-.5)*Math.min(4,L*.3),prev[1]+(q[1]-prev[1])*f+(rnd()-.5)*Math.min(4,L*.3)])}
 poly.push(q);prev=q})});
const d='M'+poly.map(p=>p[0].toFixed(1)+' '+p[1].toFixed(1)).join('L')+'Z';
const inside=(x,y)=>{let c=false;for(let i=0,j=poly.length-1;i<poly.length;j=i++){const[a,b]=poly[i],[e,f]=poly[j];if((b>y)!=(f>y)&&x<(e-a)*(y-b)/(f-b)+a)c=!c}return c};
const pal=['#440154','#3b2472','#3a4a88','#2a6f8e','#21918c','#2fa57f','#5ec962','#8fd14a','#fde725'];
// Village zones: x, y, palette class, density
const zones=[[335,320,1,.5],[370,320,2,.45],[430,320,2,.35],[335,365,1,.35],[400,350,2,.4],[440,345,2,.3],[470,330,4,.5],[490,310,5,.5],[525,310,4,.5],[530,345,3,.55],[560,355,3,.7],[590,365,3,.8],[630,370,3,.7],[655,375,5,.7],[675,358,5,.4],[610,392,4,1],[640,400,3,.8],[668,400,5,.6],[692,400,5,.06],[705,440,5,.04],[480,365,5,.5],[460,395,5,.5],[500,390,6,.3],[520,408,1,.8],[545,400,2,.8],[565,405,0,1.2],[565,430,0,1.2],[590,440,0,.9],[545,460,1,.8],[590,475,1,.8],[615,455,1,.8],[640,430,3,.9],[640,470,3,.8],[665,440,5,.5],[690,470,6,.05],[718,470,6,.3],[410,385,4,.5],[380,390,3,.35],[350,395,6,.2],[240,440,6,.6],[212,448,6,.8],[280,420,6,.45],[305,390,6,.4],[235,385,5,.5],[270,385,6,.03],[260,468,6,.35],[265,488,4,.9],[262,512,4,.6],[225,490,6,.12],[310,450,5,.3],[340,430,3,.4],[370,430,3,.5],[370,460,2,.55],[330,490,2,.6],[300,510,1,.8],[330,530,1,.8],[370,500,2,.9],[375,530,2,1.1],[300,540,1,.8],[430,440,6,.6],[420,410,6,.35],[420,470,6,.6],[470,460,4,.3],[510,460,4,.2],[480,490,6,.3],[450,500,6,.4],[500,520,6,.4],[540,495,6,.22],[590,505,6,.15],[440,535,3,.7],[410,530,3,.6],[415,562,5,.8],[470,540,6,.4],[490,550,6,.55],[430,595,6,.4],[470,600,7,.28],[560,560,3,.65],[530,580,3,.5],[508,600,3,.5],[610,525,4,.5],[640,520,4,.9],[660,495,3,.8],[630,550,5,.85],[652,560,5,.9],[682,485,6,.6],[700,530,7,.4],[705,575,8,.12],[690,555,7,.3],[680,530,7,.35],[600,570,6,.5],[600,600,6,.6],[640,600,6,.65],[630,575,5,.6],[675,590,7,.5],[508,640,1,1.4],[528,655,1,.8],[545,620,5,.6],[560,645,5,.5],[560,668,6,.6],[600,650,6,.6],[640,640,6,.65],[650,690,6,.45],[690,710,6,.3],[590,700,4,.06],[615,690,6,.4],[695,640,7,.2],[720,650,7,.12]];
const towns=[[262,488,9,6,4,110],[495,331,6,5,4,60],[410,388,5,4,4,35],[469,421,5,5,5,70],[482,424,5,5,1,40],[597,408,7,6,4,200],[601,420,5,4,1,50],[513,632,9,9,1,70],[560,669,7,3,6,110],[483,545,7,4,6,40],[366,530,9,9,2,40],[320,528,9,6,1,30],[645,547,9,10,5,60],[640,420,12,15,3,40]];
const paths=pal.map(()=>'');const dot=(x,y,c)=>{x=Math.round(x/2)*2;y=Math.round(y/2)*2;if(inside(x-3,y-3)&&inside(x+3,y+3))paths[c]+=`M${x} ${y}h${rnd()<.12?4:2}v${rnd()<.2?4:2}H${x}z`};
const K=2.4235;
for(let i=0;i<21500;i++){const x=183+rnd()*558,y=279+rnd()*453,jx=x+gauss()*8,jy=y+gauss()*8;let b,m=1e9;for(const z of zones){const q=(z[0]-jx)**2+(z[1]-jy)**2;if(q<m){m=q;b=z}}if(rnd()<b[3]*.92)dot(x*K,y*K,b[2])}
for(const[x,y,sx,sy,c,n]of towns)for(let i=0;i<n;i++)dot((x+gauss()*sx)*K,(y+gauss()*sy)*K,c);
document.getElementById('district').innerHTML=`<path d="${d}" transform="translate(12 13)" fill="none" stroke="#000" stroke-opacity=".15" stroke-width="18" stroke-linejoin="round" filter="url(#soft)"/>`+paths.map((p,i)=>`<path d="${p}" fill="${pal[i]}" shape-rendering="crispEdges"/>`).join('')+`<path d="${d}" fill="none" stroke="#2a2a2a" stroke-width="2.200" stroke-linejoin="round"/>`;
const clinic=([x,y])=>`<g transform="translate(${x} ${y})"><circle r="19.500" fill="#fff" fill-opacity=".5" stroke="#dc1c1c" stroke-width="1.800"/><path d="M0-17V17M-17 0H17" stroke="#f00" stroke-width="8.500"/></g>`;
document.getElementById('clinics').innerHTML=[[1001.4,851.8],[1001.4,851.8],[1476.5,1068],[1491.8,1131.5],[1306,1198.4],[1363.8,1348.7],[1626,1496.4],[1635,1572],[1638,1571],[1641,1569],[877.7,1348.4],[861.7,1352.4]].map(clinic).join('');
document.getElementById('handles').innerHTML=[[309,407],[1200,407],[2092,407],[309,1213],[2092,1213],[309,2020],[1200,2020],[2092,2020]].map(([x,y])=>`<rect x="${x}" y="${y}" width="20" height="20"/>`).join('');
</script>
</body>
</html>
